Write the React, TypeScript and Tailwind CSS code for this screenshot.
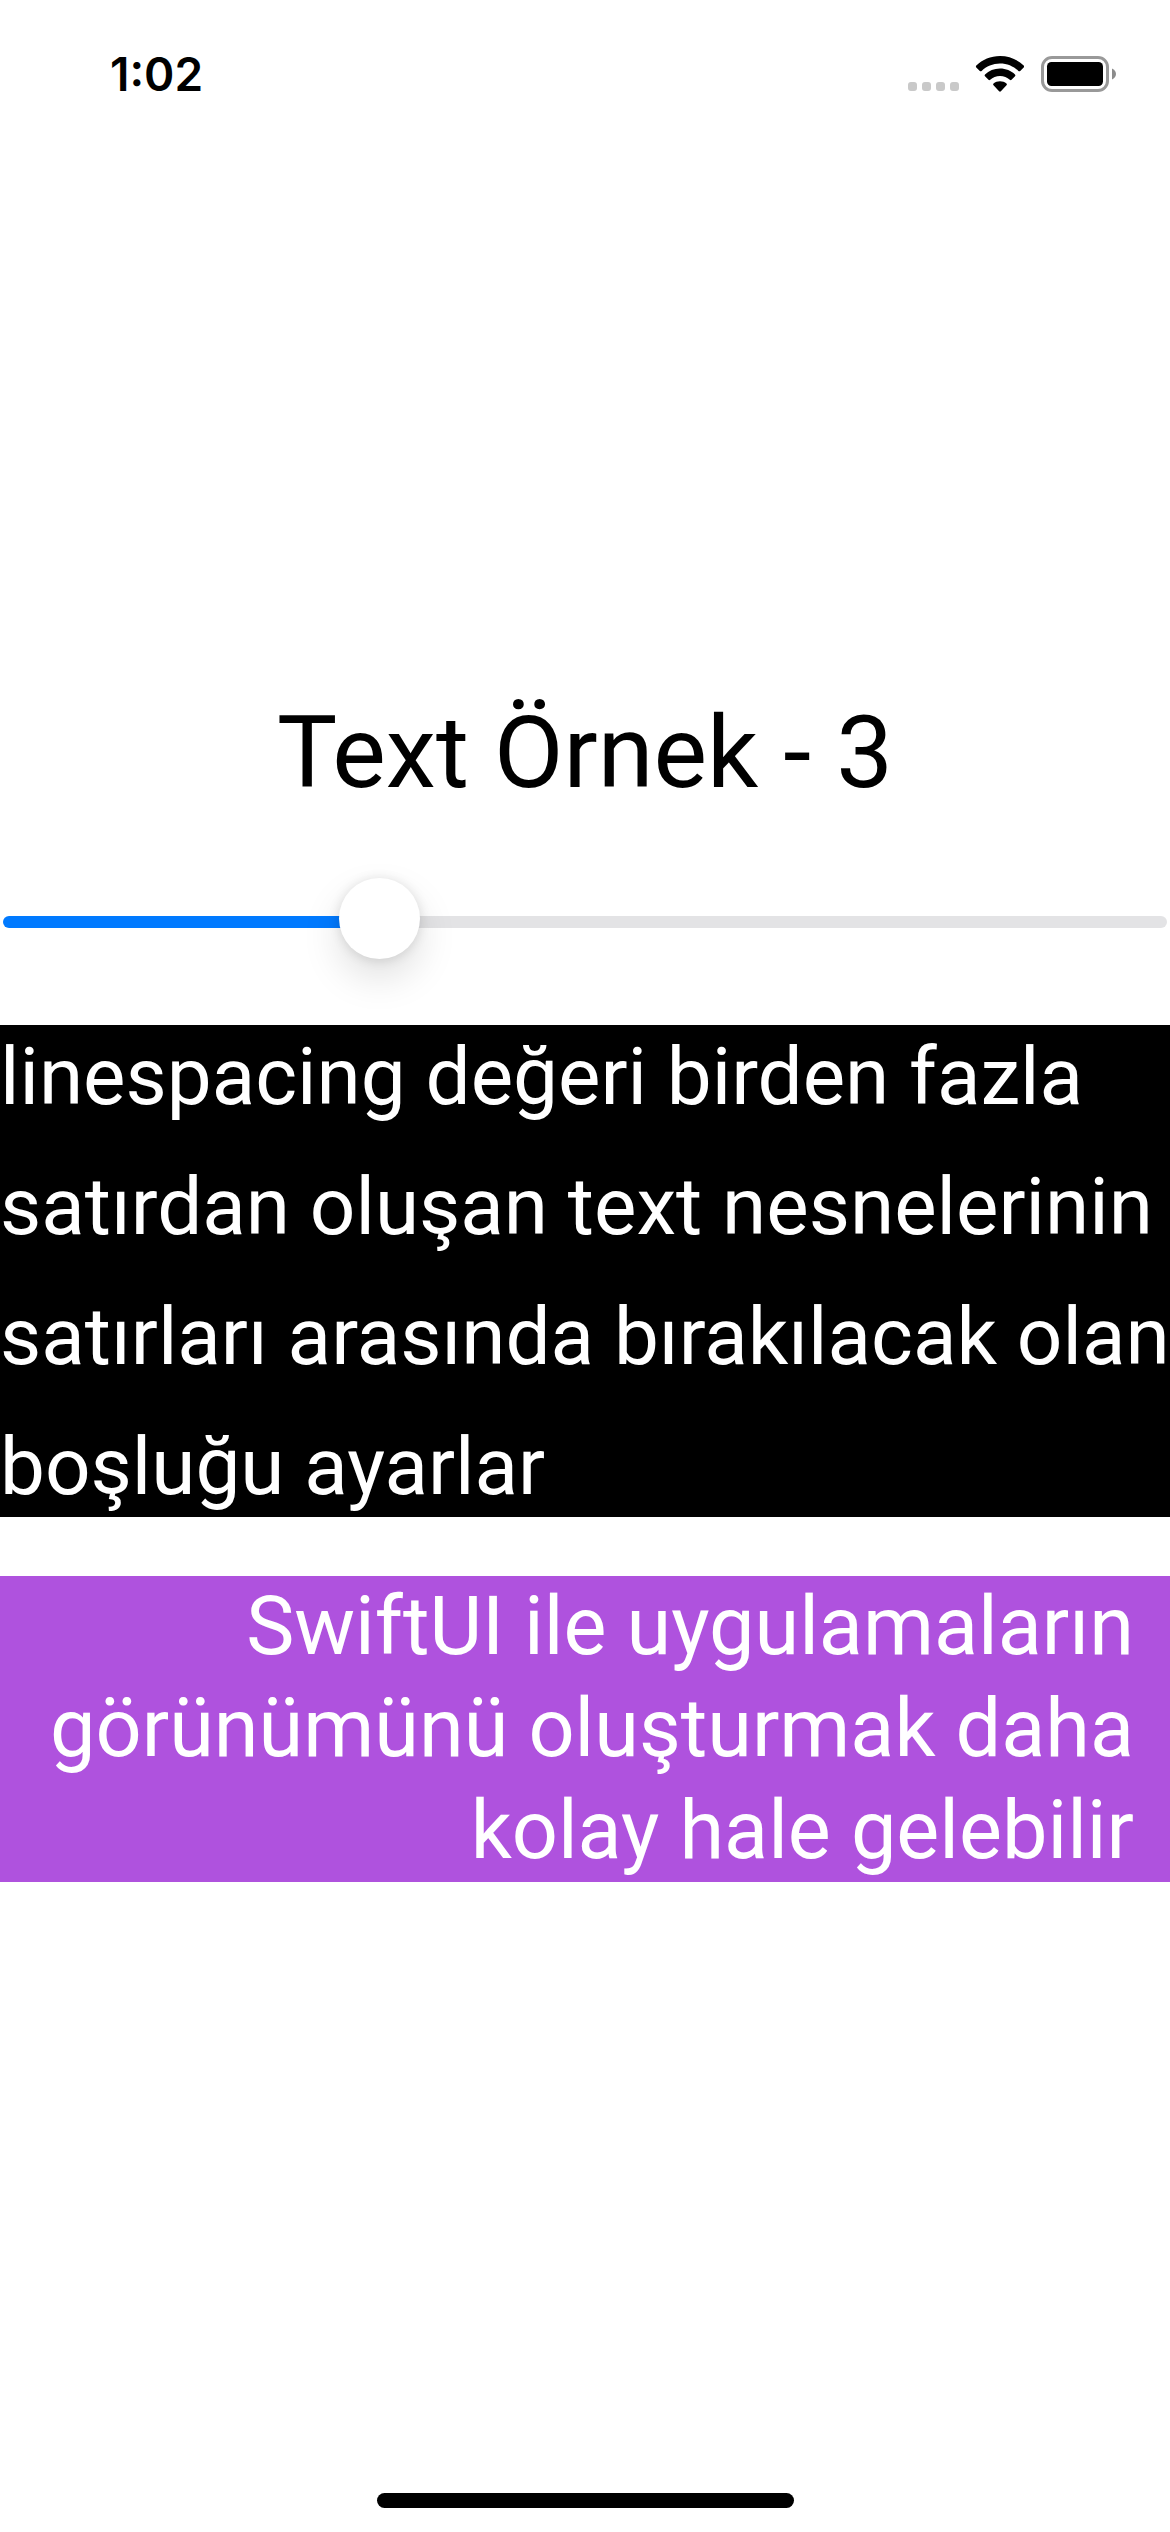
import { useState } from "react";
import type { CSSProperties } from "react";

const spacedLines = [
  "linespacing değeri birden fazla",
  "satırdan oluşan text nesnelerinin",
  "satırları arasında bırakılacak olan",
  "boşluğu ayarlar",
];

const alignedLines = [
  "SwiftUI ile uygulamaların",
  "görünümünü oluşturmak daha",
  "kolay hale gelebilir",
];

function CellularDots() {
  return (
    <div className="flex gap-[5px] pb-[2px]" aria-hidden="true">
      <span className="size-[9px] rounded-[3px] bg-[#c9c9c9]" />
      <span className="size-[9px] rounded-[3px] bg-[#c9c9c9]" />
      <span className="size-[9px] rounded-[3px] bg-[#c9c9c9]" />
      <span className="size-[9px] rounded-[3px] bg-[#c9c9c9]" />
    </div>
  );
}

function WifiIcon() {
  return (
    <svg width="50" height="37" viewBox="0 0 50 37" aria-hidden="true">
      <path d="M25 0C34.300 0 42.600 3.600 48.700 9.600Q49.500 10.500 48.700 11.400L45.200 14.900Q44.300 15.700 43.400 14.900C38.600 10.300 32.200 7.500 25 7.500S11.400 10.300 6.600 14.900Q5.700 15.700 4.800 14.900L1.300 11.400Q.5 10.500 1.300 9.600C7.400 3.600 15.700 0 25 0Z" />
      <path d="M25 12.600C30.900 12.600 36.100 14.900 40 18.500Q40.900 19.400 40 20.300L36.500 23.800Q35.700 24.600 34.800 23.800C32.200 21.500 28.800 20 25 20S17.800 21.500 15.200 23.800Q14.300 24.600 13.500 23.800L10 20.300Q9.100 19.400 10 18.500C13.900 14.900 19.100 12.600 25 12.600Z" />
      <path d="M25 25.200C27.500 25.200 29.700 26 31.500 27.500Q32.400 28.400 31.500 29.300L25.900 35.300Q25 36.200 24.100 35.300L18.500 29.300Q17.600 28.400 18.500 27.500C20.300 26 22.500 25.200 25 25.200Z" />
    </svg>
  );
}

function BatteryIcon() {
  return (
    <svg width="75" height="37" viewBox="0 0 75 37" aria-hidden="true">
      <rect x="1.500" y="1.500" width="65" height="33" rx="9.500" fill="none" stroke="#999" strokeWidth="3" />
      <rect x="6" y="6" width="56" height="24" rx="4.500" />
      <path d="M71 12.500C73.400 13.500 75 15.600 75 18S73.400 22.500 71 23.500Z" fill="#8c8c8c" />
    </svg>
  );
}

export default function App() {
  const [value, setValue] = useState(31);
  const fill = { "--fill": `calc(40px + (100% - 81px) * ${value / 100})` } as CSSProperties;

  return (
    <div className="flex min-h-screen flex-col bg-white font-['Roboto',sans-serif] text-black">
      <header className="flex h-[141px] items-start justify-between pt-14 pr-[54px] pl-[110px]">
        <time className="font-['Inter',sans-serif] text-[46px] leading-[36px] font-semibold">1:02</time>
        <div className="flex items-end gap-4">
          <CellularDots />
          <WifiIcon />
          <BatteryIcon />
        </div>
      </header>

      <main className="flex flex-1 flex-col justify-center">
        <h1 className="text-center text-[101px] leading-[126px]">Text Örnek - 3</h1>
        <div className="px-[3px] pt-[62px] pb-[66px]">
          <input
            type="range"
            min={0}
            max={100}
            value={value}
            onChange={(e) => setValue(Number(e.target.value))}
            aria-label="Satır aralığı"
            style={fill}
            className="block h-[81px] w-full appearance-none bg-transparent outline-none [&::-webkit-slider-runnable-track]:mt-[7px] [&::-webkit-slider-runnable-track]:h-3 [&::-webkit-slider-runnable-track]:rounded-full [&::-webkit-slider-runnable-track]:bg-[linear-gradient(to_right,#007aff_var(--fill),#e3e3e5_var(--fill))] [&::-webkit-slider-thumb]:-mt-[38px] [&::-webkit-slider-thumb]:size-[81px] [&::-webkit-slider-thumb]:appearance-none [&::-webkit-slider-thumb]:rounded-full [&::-webkit-slider-thumb]:bg-white [&::-webkit-slider-thumb]:shadow-[0_1px_12px_rgba(0,0,0,0.12),0_18px_39px_rgba(0,0,0,0.13)]"
          />
        </div>
        <p className="flex flex-col gap-[31px] bg-black pt-[3px] text-[80px] leading-[99px] whitespace-nowrap text-white">
          {spacedLines.map((line) => (
            <span key={line}>{line}</span>
          ))}
        </p>
        <p className="mt-[59px] flex flex-col bg-[#af52de] pr-9 text-right text-[81px] leading-[102px] whitespace-nowrap text-white">
          {alignedLines.map((line) => (
            <span key={line}>{line}</span>
          ))}
        </p>
      </main>

      <footer className="flex h-[102px] justify-center pt-[63px]">
        <div className="h-[15px] w-[417px] rounded-full bg-black" />
      </footer>
    </div>
  );
}
